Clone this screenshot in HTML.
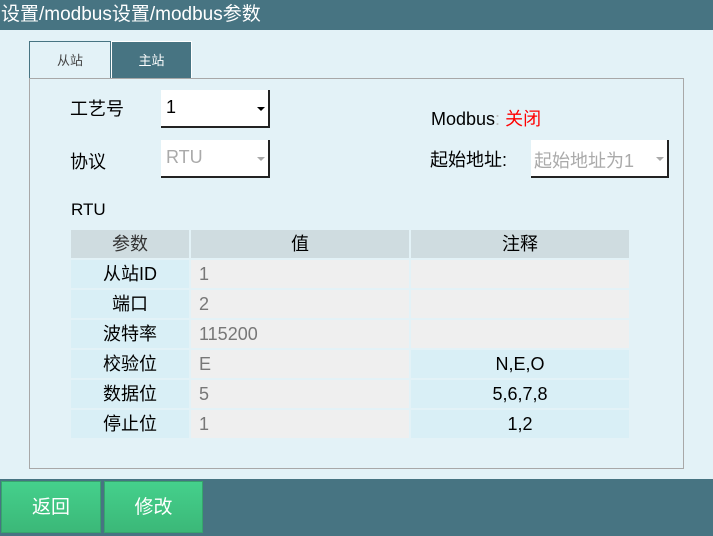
<!DOCTYPE html>
<html><head><meta charset="utf-8"><style>
*{margin:0;padding:0;box-sizing:border-box}
body{width:713px;height:536px;background:#e3f2f7;position:relative;overflow:hidden;font-family:"Liberation Sans","Noto Sans CJK SC",sans-serif;color:#000}
.a{position:absolute}
.hdr{left:0;top:0;width:713px;height:30px;background:#477482;color:#fff;font-size:19px;line-height:30px;padding-left:1px}
.tab{top:41px;height:37px;font-size:13px;line-height:37px;text-align:center}
.panel{left:29px;top:78px;width:655px;height:391px;border:1px solid #a8a8a8}
.lbl{font-size:18px}
.dd{background:#fff;border-right:2px solid #222;border-bottom:2px solid #222}
.dd span{position:absolute;left:5px;top:7px;font-size:18px}
.arr{position:absolute;right:3px;top:17px;width:0;height:0;border-left:4px solid transparent;border-right:4px solid transparent;border-top:4px solid #000}
.cell{height:28px;line-height:28px;font-size:18px;text-align:center}
.bot{left:0;top:479px;width:713px;height:57px;background:#477482}
.btn{top:481px;height:52px;background:linear-gradient(#45d08c,#3bb878);color:#fff;font-size:19px;line-height:52px;text-align:center;border:1px solid #36a56c}
</style></head><body>
<div class="a hdr">设置/modbus设置/modbus参数</div>
<div class="a tab" style="left:29px;width:82px;border:1px solid #477482;border-bottom:none;color:#444">从站</div>
<div class="a tab" style="left:111px;width:81px;background:#477482;color:#fff;border:1px solid #fff;border-bottom:none">主站</div>
<div class="a panel"></div>
<div class="a lbl" style="left:70px;top:95px">工艺号</div>
<div class="a dd" style="left:161px;top:90px;width:109px;height:38px"><span>1</span><i class="arr"></i></div>
<div class="a lbl" style="left:70px;top:148px">协议</div>
<div class="a dd" style="left:161px;top:140px;width:109px;height:38px"><span style="color:#aaa">RTU</span><i class="arr" style="border-top-color:#aaa"></i></div>
<div class="a lbl" style="left:431px;top:105px">Modbus<span style="color:#bbb">:</span> <span style="color:#f00">关闭</span></div>
<div class="a lbl" style="left:430px;top:146px">起始地址:</div>
<div class="a dd" style="left:531px;top:140px;width:138px;height:38px"><span style="color:#aaa;left:3px">起始地址为1</span><i class="arr" style="border-top-color:#aaa"></i></div>
<div class="a lbl" style="left:71px;top:200px;font-size:17px">RTU</div>

<div class="a cell" style="left:71px;top:230px;width:118px;background:#cfdce0;color:#333">参数</div>
<div class="a cell" style="left:191px;top:230px;width:218px;background:#cfdce0">值</div>
<div class="a cell" style="left:411px;top:230px;width:218px;background:#cfdce0">注释</div>

<div class="a cell" style="left:71px;top:260px;width:118px;background:#d9eff6">从站ID</div>
<div class="a cell" style="left:191px;top:260px;width:218px;background:#efefef;color:#777;text-align:left;padding-left:8px">1</div>
<div class="a cell" style="left:411px;top:260px;width:218px;background:#efefef"></div>

<div class="a cell" style="left:71px;top:290px;width:118px;background:#d9eff6">端口</div>
<div class="a cell" style="left:191px;top:290px;width:218px;background:#efefef;color:#777;text-align:left;padding-left:8px">2</div>
<div class="a cell" style="left:411px;top:290px;width:218px;background:#efefef"></div>

<div class="a cell" style="left:71px;top:320px;width:118px;background:#d9eff6">波特率</div>
<div class="a cell" style="left:191px;top:320px;width:218px;background:#efefef;color:#777;text-align:left;padding-left:8px">115200</div>
<div class="a cell" style="left:411px;top:320px;width:218px;background:#efefef"></div>

<div class="a cell" style="left:71px;top:350px;width:118px;background:#d9eff6">校验位</div>
<div class="a cell" style="left:191px;top:350px;width:218px;background:#efefef;color:#777;text-align:left;padding-left:8px">E</div>
<div class="a cell" style="left:411px;top:350px;width:218px;background:#d9eff6">N,E,O</div>

<div class="a cell" style="left:71px;top:380px;width:118px;background:#d9eff6">数据位</div>
<div class="a cell" style="left:191px;top:380px;width:218px;background:#efefef;color:#777;text-align:left;padding-left:8px">5</div>
<div class="a cell" style="left:411px;top:380px;width:218px;background:#d9eff6">5,6,7,8</div>

<div class="a cell" style="left:71px;top:410px;width:118px;background:#d9eff6">停止位</div>
<div class="a cell" style="left:191px;top:410px;width:218px;background:#efefef;color:#777;text-align:left;padding-left:8px">1</div>
<div class="a cell" style="left:411px;top:410px;width:218px;background:#d9eff6">1,2</div>

<div class="a bot"></div>
<div class="a btn" style="left:1px;width:100px">返回</div>
<div class="a btn" style="left:104px;width:99px">修改</div>
</body></html>
